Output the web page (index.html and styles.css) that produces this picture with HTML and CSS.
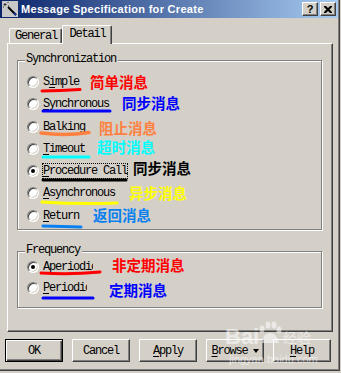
FILE: index.html
```html
<!DOCTYPE html>
<html>
<head>
<meta charset="utf-8">
<link rel="stylesheet" href="styles.css">
</head>
<body>
<div class="window">
  <div class="titlebar">
    <span class="ticon">
      <svg width="16" height="16" viewBox="0 0 16 16">
        <rect x="0" y="0" width="16" height="16" fill="#c8c8c8"/>
        <path d="M3 2v3M1.5 3.5h3M6 1v1M1 6h1M6 5h1" stroke="#303030" stroke-width="1"/>
        <path d="M6 6L14 14" stroke="#000" stroke-width="2"/>
        <path d="M12 12L14 14" stroke="#1030a0" stroke-width="2"/>
      </svg>
    </span>
    <span class="title">Message Specification for Create</span>
    <span class="capbtns">
      <span class="capbtn q">?</span>
      <span class="capbtn">
        <svg width="8" height="7" viewBox="0 0 8 7"><path d="M0 0h2l2 2 2-2h2v1l-2.5 2.5 2.5 2.5v1h-2l-2-2-2 2h-2v-1l2.5-2.5-2.5-2.5z" fill="#000"/></svg>
      </span>
    </span>
  </div>
  <div class="content">
    <div class="tabs">
      <div class="tab mono">General</div>
      <div class="tab sel mono">Detail</div>
    </div>
    <div class="panel">
      <div class="group sync">
        <div class="legend mono">Synchronization</div>
        <div class="rows">
          <div class="row"><span class="radio"></span><span class="lbl mono">S<u>i</u>mple</span></div>
          <div class="row"><span class="radio"></span><span class="lbl mono"><u>S</u>ynchronous</span></div>
          <div class="row"><span class="radio"></span><span class="lbl mono"><u>B</u>alking</span></div>
          <div class="row"><span class="radio"></span><span class="lbl mono"><u>T</u>imeout</span></div>
          <div class="row"><span class="radio on"></span><span class="lbl mono focus"><u>P</u>rocedure Call</span></div>
          <div class="row"><span class="radio"></span><span class="lbl mono"><u>A</u>synchronous</span></div>
          <div class="row"><span class="radio"></span><span class="lbl mono"><u>R</u>eturn</span></div>
        </div>
      </div>
      <div class="group freq">
        <div class="legend mono">Frequency</div>
        <div class="rows">
          <div class="row"><span class="radio on"></span><span class="lbl mono clip-a">Aperiodic</span></div>
          <div class="row"><span class="radio"></span><span class="lbl mono clip-p"><u>P</u>eriodic</span></div>
        </div>
      </div>
    </div>
    <div class="buttons">
      <div class="btn def mono"><span>OK</span></div>
      <div class="btn mono"><span>Cancel</span></div>
      <div class="btn mono"><span><u>A</u>pply</span></div>
      <div class="btn mono"><span><u>B</u>rowse</span><span class="tri"></span></div>
      <div class="btn mono"><span><u>H</u>elp</span></div>
    </div>
  </div>
</div>

<svg class="marks" width="341" height="373" viewBox="0 0 341 373">
  <g fill="none" stroke-linecap="round">
    <path d="M42 91 Q60 90.5 80 89.5" stroke="#ff0000" stroke-width="3"/>
    <path d="M43 111 L110 111" stroke="#0000ff" stroke-width="3"/>
    <path d="M41 133 Q65 136 89 132.5" stroke="#ff8040" stroke-width="3.5"/>
    <path d="M43 157 L89 157" stroke="#00ffff" stroke-width="3"/>
    <path d="M43 180 L126 180" stroke="#000000" stroke-width="3"/>
    <path d="M42 202 Q80 204.5 117 203" stroke="#ffff00" stroke-width="3"/>
    <path d="M43 226 L81 227" stroke="#0a80f0" stroke-width="3"/>
    <path d="M41 273 Q70 275 100 272" stroke="#ff0000" stroke-width="3"/>
    <path d="M43 298 L93 298" stroke="#0000ff" stroke-width="3"/>
  </g>
  <g class="note">
    <text x="90" y="88" fill="#ff0000">简单消息</text>
    <text x="122" y="109" fill="#0000ff">同步消息</text>
    <text x="99" y="134" fill="#ff8040">阻止消息</text>
    <text x="97" y="153" fill="#00ffff">超时消息</text>
    <text x="133" y="174" fill="#000000">同步消息</text>
    <text x="129" y="199" fill="#ffff00">异步消息</text>
    <text x="93" y="221" fill="#0a80f0">返回消息</text>
    <text x="112" y="271" fill="#ff0000">非定期消息</text>
    <text x="109" y="296" fill="#0000ff">定期消息</text>
  </g>
  <g class="wm" opacity="0.55">
    <text class="wm-bai" x="225" y="344">Bai</text>
    <g fill="#fff">
      <ellipse cx="262" cy="329" rx="2.5" ry="3.5"/>
      <ellipse cx="268" cy="325" rx="2.5" ry="3.5"/>
      <ellipse cx="274" cy="325" rx="2.5" ry="3.5"/>
      <ellipse cx="279" cy="330" rx="2.5" ry="3.5"/>
      <path d="M262 343 Q263 333 270 333 Q277 333 279 343 Z"/>
    </g>
    <text class="wm-cn" x="283" y="343">经验</text>
    <text class="wm-url" x="229" y="363">jingyan.baidu.com</text>
  </g>
</svg>
</body>
</html>
```
FILE: styles.css
```css
* { box-sizing: border-box; }
html, body { margin: 0; padding: 0; }
body {
  width: 341px;
  height: 373px;
  overflow: hidden;
  background: #d4d0c8;
  position: relative;
}
.mono {
  font-family: "Liberation Mono", "DejaVu Sans Mono", monospace;
  font-size: 12px;
  letter-spacing: -1.2px;
  color: #000;
}
u { text-decoration: underline; text-underline-offset: 2px; }

.window {
  width: 340px;
  height: 371px;
  border-right: 1px solid #404040;
  border-bottom: 1px solid #404040;
  padding: 0 1px 1px 0;
  box-shadow: inset -1px -1px 0 #808080;
}
.titlebar {
  height: 18px;
  display: flex;
  align-items: center;
  background: linear-gradient(to right, #0a246a, #a6caf0);
  padding: 0 2px 0 2px;
}
.ticon { width: 16px; height: 16px; display: block; }
.ticon svg { display: block; }
.title {
  margin-left: 3px;
  font-family: "Liberation Sans", Arial, sans-serif;
  font-weight: bold;
  font-size: 11px;
  letter-spacing: 0.3px;
  color: #fff;
  flex: 1;
  white-space: nowrap;
}
.capbtns { display: flex; gap: 2px; }
.capbtn {
  width: 16px;
  height: 14px;
  background: #d4d0c8;
  border: 1px solid;
  border-color: #fff #404040 #404040 #fff;
  box-shadow: inset -1px -1px 0 #808080;
  display: flex;
  align-items: center;
  justify-content: center;
}
.capbtn.q {
  font-family: "Liberation Sans", Arial, sans-serif;
  font-weight: bold;
  font-size: 11px;
  line-height: 12px;
  color: #000;
}

.content { padding: 7px 5px 0 7px; }
.tabs {
  display: flex;
  align-items: flex-end;
  height: 18px;
  padding-left: 2px;
  position: relative;
  z-index: 1;
}
.tab {
  height: 15px;
  width: 53px;
  border-left: 1px solid #fff;
  border-top: 1px solid #fff;
  border-right: 1px solid #404040;
  border-radius: 2px 2px 0 0;
  box-shadow: inset -1px 0 0 #808080;
  background: #d4d0c8;
  display: flex;
  align-items: center;
  justify-content: center;
  line-height: 13px;
  padding-left: 1px;
}
.tab.sel {
  height: 19px;
  width: 50px;
  margin-bottom: -1px;
  padding-bottom: 2px;
}
.panel {
  width: 326px;
  height: 289px;
  border: 1px solid;
  border-color: #fff #404040 #404040 #fff;
  box-shadow: inset -1px -1px 0 #808080;
  padding: 16px 9px;
}
.group {
  width: 305px;
  border: 1px solid #808080;
  box-shadow: inset 1px 1px 0 #fff, 1px 1px 0 #fff;
}
.sync { height: 170px; }
.freq { height: 57px; margin-top: 21px; }
.legend {
  display: table;
  margin: -8px 0 0 7px;
  padding: 0 2px 0 1px;
  background: #d4d0c8;
  line-height: 13px;
  height: 13px;
}
.rows { display: flex; flex-direction: column; }
.sync .rows { margin-top: 8px; gap: 6.25px; }
.freq .rows { margin-top: 2px; gap: 5.3px; }
.row {
  height: 16px;
  display: flex;
  align-items: center;
  padding-left: 9px;
}
.radio {
  width: 12px;
  height: 12px;
  border-radius: 50%;
  border: 1px solid;
  border-color: #808080 #fff #fff #808080;
  box-shadow: inset 1px 1px 0 #404040, inset -1px -1px 0 #d4d0c8;
  background: #fff;
  display: flex;
  align-items: center;
  justify-content: center;
  flex: none;
}
.radio.on::after {
  content: "";
  width: 4px;
  height: 4px;
  border-radius: 50%;
  background: #000;
}
.lbl {
  margin-left: 4px;
  line-height: 14px;
  white-space: nowrap;
}
.lbl.focus {
  outline: 1px dotted #000;
  outline-offset: 0;
}
.clip-a { width: 50px; overflow: hidden; }
.clip-p { width: 44px; overflow: hidden; }

.buttons {
  display: flex;
  gap: 9px;
  margin-top: 7px;
  padding-left: 5px;
  margin-left: -7px;
}
.btn {
  width: 58px;
  height: 23px;
  border: 1px solid;
  border-color: #fff #404040 #404040 #fff;
  box-shadow: inset -1px -1px 0 #808080;
  display: flex;
  align-items: center;
  justify-content: center;
  gap: 5px;
  line-height: 14px;
  white-space: nowrap;
}
.btn.def {
  border-color: #000;
  box-shadow: inset 1px 1px 0 #fff, inset -1px -1px 0 #404040, inset -2px -2px 0 #808080;
}
.tri {
  width: 0;
  height: 0;
  border-left: 3.5px solid transparent;
  border-right: 3.5px solid transparent;
  border-top: 4px solid #000;
}

.marks {
  position: absolute;
  left: 0;
  top: 0;
  pointer-events: none;
}
.note text {
  font-family: "Noto Sans CJK SC", sans-serif;
  font-weight: bold;
  font-size: 14.5px;
}
.wm text { fill: #fff; }
.wm-bai {
  font-family: "Liberation Sans", Arial, sans-serif;
  font-weight: bold;
  font-size: 22px;
}
.wm-cn {
  font-family: "Noto Sans CJK SC", sans-serif;
  font-size: 14px;
}
.wm-url {
  font-family: "Liberation Sans", Arial, sans-serif;
  font-size: 11px;
}
```
